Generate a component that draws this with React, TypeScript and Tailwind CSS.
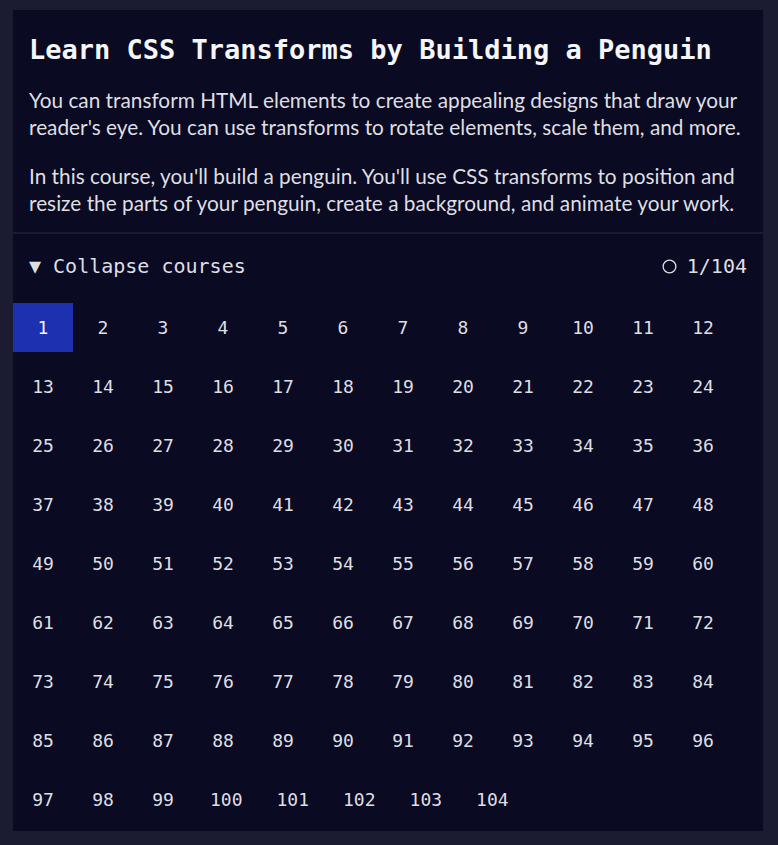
import React from 'react';

const mono = { fontFamily: '"DejaVu Sans Mono", "Liberation Mono", monospace' };

export default function App() {
  const steps = Array.from({ length: 104 }, (_, i) => i + 1);
  const current = 1;

  return (
    <div className="min-h-screen bg-[#1b1b32] pt-[10px] pl-[13px]">
      <div className="w-[750px]">
        <section className="bg-[#0a0a23] px-4 pt-[24px] pb-[16px]">
          <h1
            className="text-[27px] leading-[32px] font-bold text-[#f5f6f7]"
            style={mono}
          >
            Learn CSS Transforms by Building a Penguin
          </h1>
          <div className="font-['Lato',sans-serif] text-[20.8px] leading-[27px] text-[#dfdfe2]">
            <p className="mt-[20px]">
              You can transform HTML elements to create appealing designs that draw your reader's eye. You can use transforms to rotate elements, scale them, and more.
            </p>
            <p className="mt-[22px]">
              In this course, you'll build a penguin. You'll use CSS transforms to position and resize the parts of your penguin, create a background, and animate your work.
            </p>
          </div>
        </section>

        <section className="mt-[2px] bg-[#0a0a23]">
          <div
            className="h-[64px] px-4 flex items-center justify-between text-[20px] text-[#dfdfe2]"
            style={mono}
          >
            <span>▼ Collapse courses</span>
            <div className="flex items-center gap-[10px]">
              <svg width="15" height="15" viewBox="0 0 16 16">
                <circle cx="8" cy="8" r="6.8" fill="none" stroke="#dfdfe2" strokeWidth="1.4" />
              </svg>
              <span>{current}/104</span>
            </div>
          </div>

          <div className="flex flex-wrap pb-[2px]" style={mono}>
            {steps.map((n) => (
              <div
                key={n}
                className={
                  n === current
                    ? 'h-[49px] my-[5px] min-w-[60px] px-[17px] flex items-center justify-center bg-[#1c30b0] text-[18px] text-[#f5f6f7]'
                    : 'h-[49px] my-[5px] min-w-[60px] px-[17px] flex items-center justify-center text-[18px] text-[#dfdfe2]'
                }
              >
                {n}
              </div>
            ))}
          </div>
        </section>
      </div>
    </div>
  );
}
